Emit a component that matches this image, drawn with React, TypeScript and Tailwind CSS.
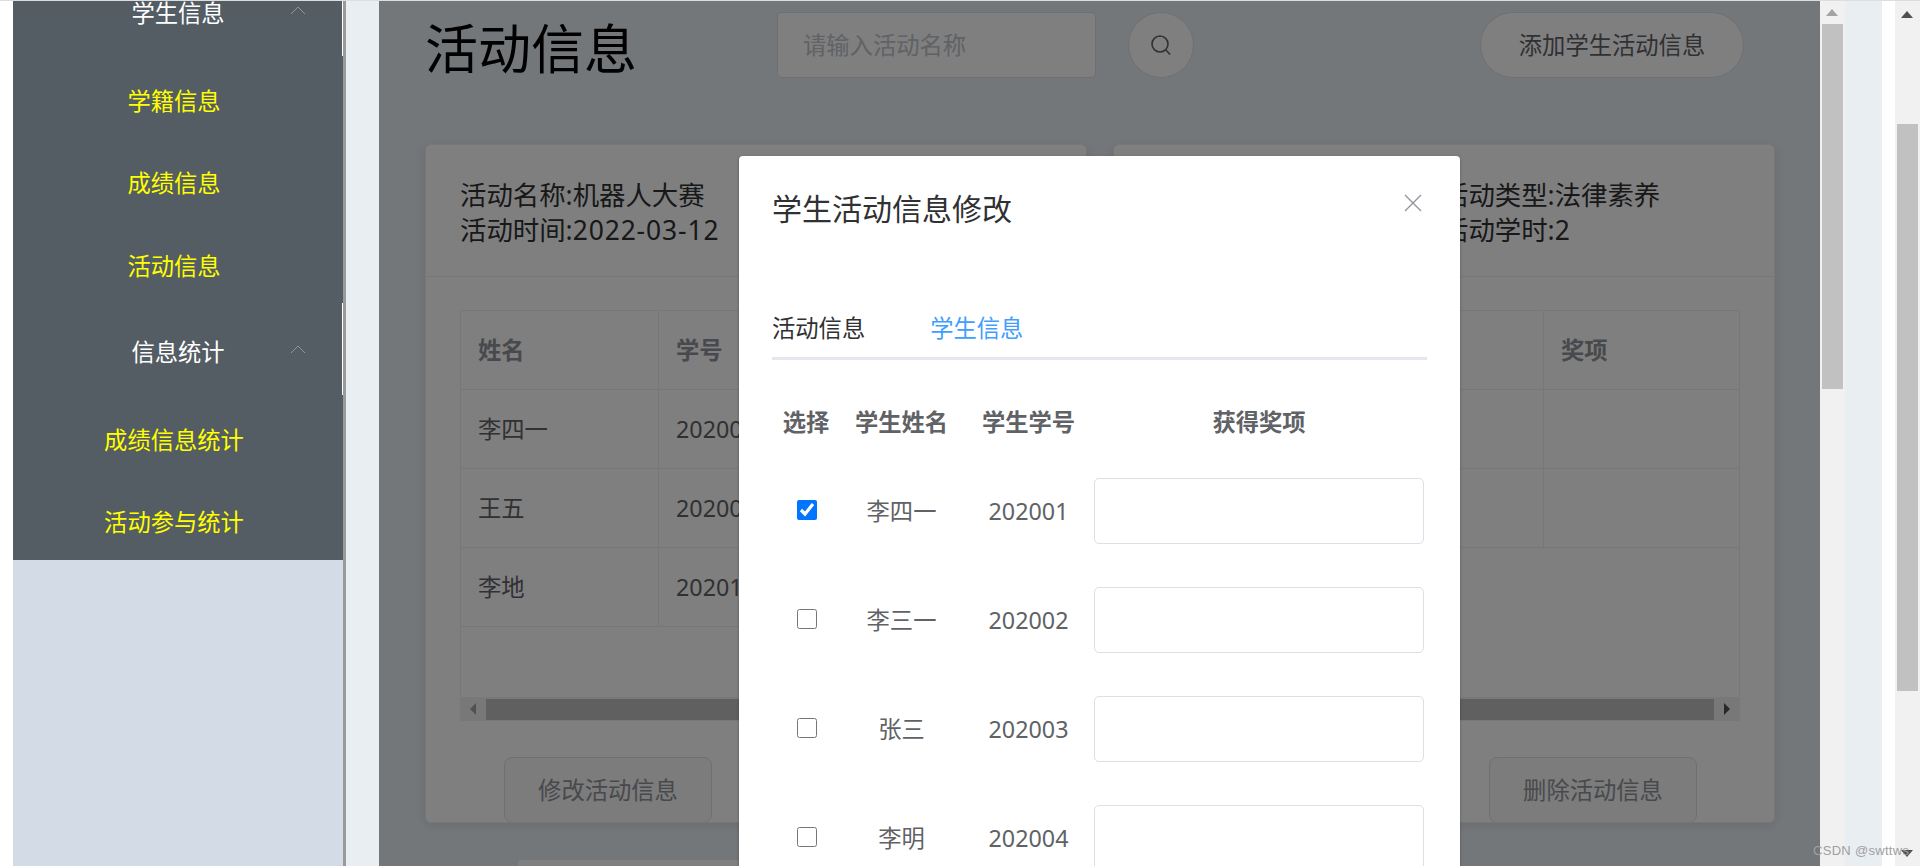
import { Fragment } from "react"

const pageFont = "[font-family:'Noto_Sans','Noto_Sans_CJK_SC',sans-serif]"

const statsItems = ["成绩信息统计", "活动参与统计"]
const studentItems = ["学籍信息", "成绩信息", "活动信息"]

const dialogRows = [
  { name: "李四一", no: "202001", checked: true },
  { name: "李三一", no: "202002", checked: false },
  { name: "张三", no: "202003", checked: false },
  { name: "李明", no: "202004", checked: false },
]

const Triangle = ({ dir, className }: { dir: "up" | "down" | "left" | "right"; className: string }) => {
  const points = {
    up: "0,10 6,3 12,10",
    down: "0,2 12,2 6,9",
    left: "9,0 9,12 3,6",
    right: "3,0 3,12 9,6",
  }[dir]
  return (
    <svg width="12" height="12" viewBox="0 0 12 12" className={className}>
      <polygon points={points} fill="currentColor" />
    </svg>
  )
}

const MenuHeader = ({ label }: { label: string }) => (
  <div className="relative flex h-[92px] items-center justify-center pt-[7px] text-white">
    <span>{label}</span>
    <svg width="16" height="10" viewBox="0 0 16 10" className="absolute left-[277px] top-[41px] text-[#909399]">
      <path d="M1 9 L8 2 L15 9" fill="none" stroke="currentColor" strokeWidth="1" />
    </svg>
    <div className="absolute right-0 top-0 h-full w-px bg-white" />
  </div>
)

const MenuItem = ({ label }: { label: string }) => (
  <div className="flex h-[82.4px] items-center justify-center pt-[8px] pr-[8px] text-[#ffff00]">{label}</div>
)

const Sidebar = () => (
  <aside className="w-[330px] shrink-0 overflow-hidden bg-[#d3dce6] text-[23.3px]">
    <div className="-mt-[37px] bg-[#545c64]">
      <MenuHeader label="学生信息" />
      {studentItems.map((item) => (
        <MenuItem key={item} label={item} />
      ))}
      <MenuHeader label="信息统计" />
      {statsItems.map((item) => (
        <MenuItem key={item} label={item} />
      ))}
    </div>
  </aside>
)

interface ActivityCardProps {
  name: string
  date: string
  right: string[]
  rows: { name: string; no: string }[]
  footerPadding: string
}

const ActivityCard = ({ name, date, right, rows, footerPadding }: ActivityCardProps) => (
  <div className="h-[679px] w-[662px] overflow-hidden rounded-[6px] border border-[#ebeef5] bg-white text-[#303133] shadow-[0_2px_12px_rgba(0,0,0,0.1)]">
    <div className="flex h-[132px] border-b border-[#ebeef5] pl-[34px] pt-[33px] text-[26.4px] leading-[35px]">
      <div className="w-[294px] shrink-0">
        <div>活动名称:{name}</div>
        <div>
          活动时间:<span className="tracking-[0.9px]">{date}</span>
        </div>
      </div>
      <div>
        {right.map((line) => (
          <div key={line}>{line}</div>
        ))}
      </div>
    </div>
    <div className="mx-[34px] mt-[33px] h-[411px] w-[592px] border-x border-t border-[#ebeef5] text-[23.3px]">
      <div className="h-[386px]">
        <div className="grid h-[79px] grid-cols-[198px_197px_1fr] border-b border-[#ebeef5] font-bold text-[#909399]">
          {["姓名", "学号", "奖项"].map((title, i) => (
            <div key={title} className={`flex items-center pl-[17px] ${i < 2 ? "border-r border-[#ebeef5]" : ""}`}>
              {title}
            </div>
          ))}
        </div>
        {rows.map((row) => (
          <div key={row.name} className="grid h-[79px] grid-cols-[198px_197px_1fr] border-b border-[#ebeef5] text-[#606266]">
            <div className="flex items-center border-r border-[#ebeef5] pl-[17px]">{row.name}</div>
            <div className="flex items-center border-r border-[#ebeef5] pl-[17px]">{row.no}</div>
            <div />
          </div>
        ))}
      </div>
      <div className="-mx-px flex h-[24px] items-center bg-[#f1f1f1]">
        <div className="flex w-[26px] justify-center text-[#a3a3a3]">
          <Triangle dir="left" className="" />
        </div>
        <div className="h-[21px] flex-1 bg-[#c1c1c1]" />
        <div className="flex w-[26px] justify-center text-[#505050]">
          <Triangle dir="right" className="" />
        </div>
      </div>
    </div>
    <div className={`mt-[36px] flex justify-between ${footerPadding}`}>
      <button className="h-[66px] w-[208px] rounded-[8px] border border-[#dcdfe6] bg-[#f8f8f8] text-[23.3px] text-[#909399]">
        修改活动信息
      </button>
      <button className="h-[66px] w-[208px] rounded-[8px] border border-[#dcdfe6] bg-[#f8f8f8] text-[23.3px] text-[#909399]">
        删除活动信息
      </button>
    </div>
  </div>
)

const StudentDialog = () => (
  <div className="absolute left-[360px] top-[155px] h-[900px] w-[721px] rounded-[4px] bg-white px-[33px] shadow-[0_1px_3px_rgba(0,0,0,0.3)]">
    <div className="relative flex h-[106px] items-center pb-[1px] text-[30px] text-[#303133]">
      学生活动信息修改
      <svg width="18" height="18" viewBox="0 0 18 18" className="absolute left-[632px] top-[38px] text-[#909399]">
        <path d="M1 1 L17 17 M17 1 L1 17" stroke="currentColor" strokeWidth="1.3" />
      </svg>
    </div>
    <div className="flex h-[98px] items-end gap-[65px] border-b-[3px] border-[#e4e7ed] pb-[11px] text-[23.3px] text-[#303133]">
      <span>活动信息</span>
      <span className="text-[#409eff]">学生信息</span>
    </div>
    <div className="mt-[39px] grid grid-cols-[68px_123px_131px_330px] items-center gap-y-[43px] text-[23.3px] text-[#606266]">
      <div className="-mb-[11px] flex h-[47px] items-center justify-center whitespace-nowrap font-bold">选择</div>
      <div className="-mb-[11px] flex h-[47px] items-center justify-center whitespace-nowrap font-bold">学生姓名</div>
      <div className="-mb-[11px] flex h-[47px] items-center justify-center whitespace-nowrap font-bold">学生学号</div>
      <div className="-mb-[11px] flex h-[47px] items-center justify-center whitespace-nowrap font-bold">获得奖项</div>
      {dialogRows.map((row) => (
        <Fragment key={row.no}>
          <div className="flex justify-center">
            <input type="checkbox" defaultChecked={row.checked} className="-mt-[2px] ml-[2px] h-5 w-5" />
          </div>
          <div className="text-center">{row.name}</div>
          <div className="text-center">{row.no}</div>
          <input className="h-[66px] w-[330px] rounded-[5px] border border-[#dcdfe6] bg-white" />
        </Fragment>
      ))}
    </div>
  </div>
)

const Main = () => (
  <main className="relative w-[1441px] shrink-0 overflow-hidden bg-[#e9eef3] pl-[46px] pt-[11px]">
    <div className="flex h-[66px] items-center">
      <h1 className="w-[352px] pt-[8px] text-[53px] font-normal text-black">活动信息</h1>
      <input
        placeholder="请输入活动名称"
        className="h-[66px] w-[319px] rounded-[5px] border border-[#dcdfe6] bg-white px-[25px] text-[23.3px] placeholder:text-[#c0c4cc]"
      />
      <button className="ml-[32px] flex h-[66px] w-[66px] items-center justify-center rounded-full border border-[#dcdfe6] bg-white text-[#606266]">
        <svg width="24" height="24" viewBox="0 0 24 24">
          <circle cx="11" cy="11" r="8" fill="none" stroke="currentColor" strokeWidth="1.6" />
          <path d="M17 17 L21 21.5" stroke="currentColor" strokeWidth="1.6" />
        </svg>
      </button>
      <button className="ml-[286px] h-[66px] w-[264px] rounded-full border border-[#dcdfe6] bg-white text-[23.3px] text-[#606266]">
        添加学生活动信息
      </button>
    </div>
    <div className="mt-[66px] flex gap-[26px]">
      <ActivityCard
        name="机器人大赛"
        date="2022-03-12"
        right={["活动类型:科技创新", "活动学时:2"]}
        rows={[
          { name: "李四一", no: "202001" },
          { name: "王五", no: "202005" },
          { name: "李地", no: "202010" },
        ]}
        footerPadding="px-[78px]"
      />
      <ActivityCard
        name="法律知识竞赛"
        date="2022-03-20"
        right={["活动类型:法律素养", "活动学时:2"]}
        rows={[
          { name: "李四一", no: "202001" },
          { name: "王五", no: "202005" },
        ]}
        footerPadding="px-[77px]"
      />
    </div>
    <div className="ml-[93px] mt-[37px] h-[40px] w-[600px] rounded-[4px] bg-white" />
    <div className="absolute inset-0 bg-black/50" />
    <StudentDialog />
  </main>
)

export default function App() {
  return (
    <div className={`relative h-[866px] w-[1920px] overflow-hidden border-t border-[#dddddd] bg-white ${pageFont}`}>
      <div className="flex h-full">
        <div className="w-[13px] shrink-0 bg-white" />
        <Sidebar />
        <div className="w-[3px] shrink-0 bg-[#9a9a9a]" />
        <div className="w-[33px] shrink-0 bg-[#e9eef3]" />
        <Main />
        <div className="relative w-[25px] shrink-0 bg-[#f1f1f1]">
          <Triangle dir="up" className="absolute left-[6px] top-[5px] text-[#a3a3a3]" />
          <div className="ml-[2px] mt-[23px] h-[365px] w-[21px] bg-[#c1c1c1]" />
        </div>
        <div className="w-[37px] shrink-0 bg-[#e9eef3]" />
        <div className="w-[13px] shrink-0 bg-white" />
        <div className="relative w-[25px] shrink-0 bg-[#f1f1f1]">
          <Triangle dir="up" className="absolute left-[6px] top-[7px] text-[#505050]" />
          <div className="ml-[2px] mt-[123px] h-[567px] w-[21px] bg-[#c1c1c1]" />
          <Triangle dir="down" className="absolute bottom-[6px] left-[6px] text-[#505050]" />
        </div>
      </div>
      <div className="absolute left-[1813px] top-[840px] whitespace-nowrap font-['Liberation_Sans',sans-serif] text-[13px] tracking-[0.3px] text-[#a0a0a0]">
        CSDN @swttws
      </div>
    </div>
  )
}
